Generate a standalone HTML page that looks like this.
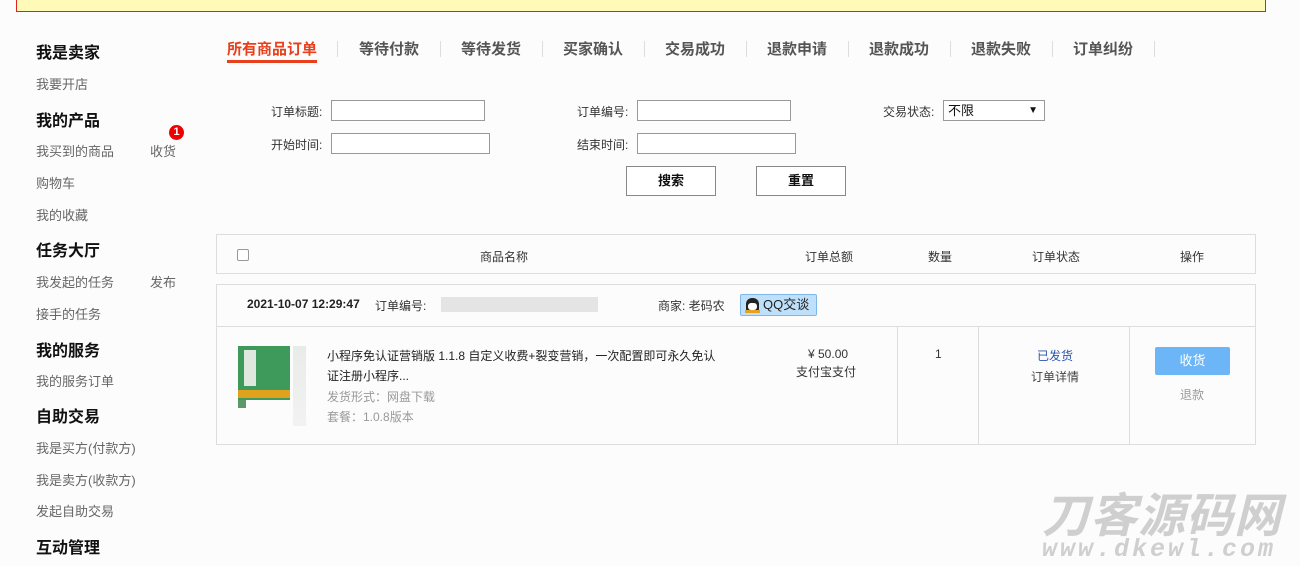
<!DOCTYPE html>
<html><head><meta charset="utf-8"><style>
*{margin:0;padding:0;box-sizing:border-box}
body{width:1300px;height:566px;background:#fcfcfc;font-family:"Liberation Sans","Noto Sans CJK SC",sans-serif;font-size:12px;color:#555;position:relative;overflow:hidden}
.a{position:absolute;white-space:nowrap}
.h{font-size:16px;font-weight:bold;color:#111}
.l{font-size:13px;color:#666}
.tab{font-size:15px;font-weight:bold;color:#555;top:38px}
.sep{position:absolute;top:41px;width:1px;height:16px;background:#ddd}
.inp{position:absolute;height:21px;border:1px solid #999;background:#fff}
.btn{position:absolute;width:90px;height:30px;border:1px solid #888;background:#fff;font-size:13px;font-weight:bold;color:#111;text-align:center;line-height:28px}
.box{position:absolute;border:1px solid #ddd}
</style></head><body>
<div class="a" style="left:16px;top:-2px;width:1250px;height:14px;background:#fffab8;border:1px solid #d22"></div>

<div class="a h" style="left:36px;top:39px">我是卖家</div>
<div class="a l" style="left:36px;top:74px">我要开店</div>
<div class="a h" style="left:36px;top:107px">我的产品</div>
<div class="a l" style="left:36px;top:141px">我买到的商品</div>
<div class="a l" style="left:150px;top:141px">收货</div>
<div class="a" style="left:169px;top:125px;width:15px;height:15px;border-radius:50%;background:#e00;color:#fff;font-size:11px;font-weight:bold;text-align:center;line-height:15px">1</div>
<div class="a l" style="left:36px;top:173px">购物车</div>
<div class="a l" style="left:36px;top:205px">我的收藏</div>
<div class="a h" style="left:36px;top:237px">任务大厅</div>
<div class="a l" style="left:36px;top:272px">我发起的任务</div>
<div class="a l" style="left:150px;top:272px">发布</div>
<div class="a l" style="left:36px;top:304px">接手的任务</div>
<div class="a h" style="left:36px;top:337px">我的服务</div>
<div class="a l" style="left:36px;top:371px">我的服务订单</div>
<div class="a h" style="left:36px;top:403px">自助交易</div>
<div class="a l" style="left:36px;top:438px">我是买方(付款方)</div>
<div class="a l" style="left:36px;top:470px">我是卖方(收款方)</div>
<div class="a l" style="left:36px;top:501px">发起自助交易</div>
<div class="a h" style="left:36px;top:534px">互动管理</div>

<div class="a tab" style="left:227px;color:#e8401c">所有商品订单</div>
<div class="a" style="left:227px;top:60px;width:90px;height:3px;background:#e8401c"></div>
<div class="a tab" style="left:359px">等待付款</div>
<div class="a tab" style="left:461px">等待发货</div>
<div class="a tab" style="left:563px">买家确认</div>
<div class="a tab" style="left:665px">交易成功</div>
<div class="a tab" style="left:767px">退款申请</div>
<div class="a tab" style="left:869px">退款成功</div>
<div class="a tab" style="left:971px">退款失败</div>
<div class="a tab" style="left:1073px">订单纠纷</div>
<div class="sep" style="left:337px"></div><div class="sep" style="left:440px"></div><div class="sep" style="left:542px"></div><div class="sep" style="left:644px"></div><div class="sep" style="left:746px"></div><div class="sep" style="left:848px"></div><div class="sep" style="left:950px"></div><div class="sep" style="left:1052px"></div><div class="sep" style="left:1154px"></div>

<div class="a" style="left:271px;top:103px;color:#333">订单标题:</div>
<div class="inp" style="left:331px;top:100px;width:154px"></div>
<div class="a" style="left:577px;top:103px;color:#333">订单编号:</div>
<div class="inp" style="left:637px;top:100px;width:154px"></div>
<div class="a" style="left:883px;top:103px;color:#333">交易状态:</div>
<div class="inp" style="left:943px;top:100px;width:102px;font-size:13px;color:#111;padding-left:4px;line-height:19px">不限<span style="position:absolute;right:6px;font-size:10px">▼</span></div>
<div class="a" style="left:271px;top:136px;color:#333">开始时间:</div>
<div class="inp" style="left:331px;top:133px;width:159px"></div>
<div class="a" style="left:577px;top:136px;color:#333">结束时间:</div>
<div class="inp" style="left:637px;top:133px;width:159px"></div>
<div class="btn" style="left:626px;top:166px">搜索</div>
<div class="btn" style="left:756px;top:166px">重置</div>

<div class="box" style="left:216px;top:234px;width:1040px;height:40px"></div>
<div class="a" style="left:237px;top:249px;width:12px;height:12px;border:1px solid #999;border-radius:2px;background:#fff"></div>
<div class="a" style="left:480px;top:248px;color:#333">商品名称</div>
<div class="a" style="left:805px;top:248px;color:#333">订单总额</div>
<div class="a" style="left:928px;top:248px;color:#333">数量</div>
<div class="a" style="left:1032px;top:248px;color:#333">订单状态</div>
<div class="a" style="left:1180px;top:248px;color:#333">操作</div>

<div class="box" style="left:216px;top:284px;width:1040px;height:161px"></div>
<div class="a" style="left:217px;top:326px;width:1038px;height:1px;background:#ddd"></div>
<div class="a" style="left:247px;top:297px;font-weight:bold;color:#222">2021-10-07 12:29:47</div>
<div class="a" style="left:375px;top:297px;color:#333">订单编号:</div>
<div class="a" style="left:441px;top:297px;width:157px;height:15px;background:#e4e4e4"></div>
<div class="a" style="left:658px;top:297px;color:#333">商家: 老码农</div>
<div class="a" style="left:740px;top:294px;width:77px;height:22px;background:#bfe0fa;border:1px solid #7fb8e8;border-radius:2px;font-size:13px;color:#222;padding-left:22px;line-height:20px"><span style="position:absolute;left:5px;top:3px;width:13px;height:15px;border-radius:6px 6px 4px 4px;background:#222"></span><span style="position:absolute;left:7px;top:8px;width:9px;height:7px;border-radius:3px;background:#fff"></span><span style="position:absolute;left:4px;top:15px;width:15px;height:3px;background:#e8a020"></span>QQ交谈</div>
<div class="a" style="left:897px;top:327px;width:1px;height:117px;background:#ddd"></div>
<div class="a" style="left:978px;top:327px;width:1px;height:117px;background:#ddd"></div>
<div class="a" style="left:1129px;top:327px;width:1px;height:117px;background:#ddd"></div>

<div class="a" style="left:238px;top:346px;width:52px;height:54px;background:#3d9a5a"></div>
<div class="a" style="left:238px;top:390px;width:52px;height:8px;background:#e0a21c"></div>
<div class="a" style="left:244px;top:350px;width:12px;height:36px;background:#dfe8df"></div>
<div class="a" style="left:238px;top:400px;width:8px;height:8px;background:#5a9a6a"></div>
<div class="a" style="left:293px;top:346px;width:13px;height:80px;background:linear-gradient(#e8ece8,#f2f2f2)"></div>
<div class="a" style="left:327px;top:346px;font-size:12px;color:#222;line-height:20px;white-space:normal;width:400px">小程序免认证营销版 1.1.8 自定义收费+裂变营销，一次配置即可永久免认<br>证注册小程序...</div>
<div class="a" style="left:327px;top:388px;color:#999">发货形式：网盘下载</div>
<div class="a" style="left:327px;top:408px;color:#999">套餐：1.0.8版本</div>
<div class="a" style="left:808px;top:347px;color:#333">¥ 50.00</div>
<div class="a" style="left:796px;top:363px;color:#333">支付宝支付</div>
<div class="a" style="left:935px;top:347px;color:#333">1</div>
<div class="a" style="left:1037px;top:347px;color:#2a55a8">已发货</div>
<div class="a" style="left:1031px;top:368px;color:#444">订单详情</div>
<div class="a" style="left:1155px;top:347px;width:75px;height:28px;background:#6cb6f8;border-radius:2px;color:#fff;font-size:13px;text-align:center;line-height:28px">收货</div>
<div class="a" style="left:1180px;top:386px;color:#999">退款</div>

<div class="a" style="left:1042px;top:490px;font-size:47px;font-weight:bold;font-style:italic;color:#cfcfcf;letter-spacing:1px;line-height:52px">刀客源码网</div>
<div class="a" style="left:1042px;top:536px;font-size:25px;font-weight:bold;font-style:italic;color:#cfcfcf;letter-spacing:3px;font-family:'Liberation Mono',monospace;line-height:28px">www.dkewl.com</div>
</body></html>
